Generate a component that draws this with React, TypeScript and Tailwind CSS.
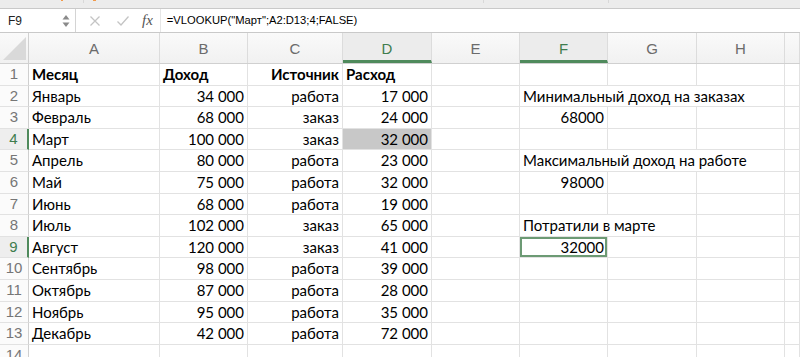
import React from "react";

const COLS = [
  { key: "A", w: 131 },
  { key: "B", w: 88 },
  { key: "C", w: 95 },
  { key: "D", w: 89 },
  { key: "E", w: 88 },
  { key: "F", w: 88 },
  { key: "G", w: 89 },
  { key: "H", w: 88 },
  { key: "I", w: 15 },
];

type Cell = { text?: string; align?: "left" | "right"; bold?: boolean; span?: number; gray?: boolean; active?: boolean };

const table: string[][] = [
  ["Месяц", "Доход", "Источник", "Расход"],
  ["Январь", "34 000", "работа", "17 000"],
  ["Февраль", "68 000", "заказ", "24 000"],
  ["Март", "100 000", "заказ", "32 000"],
  ["Апрель", "80 000", "работа", "23 000"],
  ["Май", "75 000", "работа", "32 000"],
  ["Июнь", "68 000", "работа", "19 000"],
  ["Июль", "102 000", "заказ", "65 000"],
  ["Август", "120 000", "заказ", "41 000"],
  ["Сентябрь", "98 000", "работа", "39 000"],
  ["Октябрь", "87 000", "работа", "28 000"],
  ["Ноябрь", "95 000", "работа", "35 000"],
  ["Декабрь", "42 000", "работа", "72 000"],
];

const extra: Record<number, Cell> = {
  2: { text: "Минимальный доход на заказах", span: 3 },
  3: { text: "68000", align: "right" },
  5: { text: "Максимальный доход на работе", span: 3 },
  6: { text: "98000", align: "right" },
  8: { text: "Потратили в марте", span: 2 },
  9: { text: "32000", align: "right", active: true },
};

function buildRow(r: number): Cell[] {
  const cells: Cell[] = [];
  const d = table[r - 1];
  if (d) {
    const bold = r === 1;
    cells.push({ text: d[0], bold, align: "left" });
    cells.push({ text: d[1], bold, align: bold ? "left" : "right" });
    cells.push({ text: d[2], bold, align: "right" });
    cells.push({ text: d[3], bold, align: bold ? "left" : "right", gray: r === 4 });
  } else {
    cells.push({}, {}, {}, {});
  }
  cells.push({});
  const ex = extra[r];
  if (ex) {
    cells.push(ex);
    const sp = ex.span || 1;
    for (let i = sp; i < 3; i++) cells.push({});
  } else {
    cells.push({}, {}, {});
  }
  cells.push({});
  return cells;
}

function RowView({ r }: { r: number }) {
  const cells = buildRow(r);
  const sel = r === 4 || r === 9;
  let ci = 0;
  return (
    <div className="flex h-[21.6px] shrink-0">
      <div
        className={`w-[29px] shrink-0 flex items-center justify-center border-b border-[#e2e2e2] text-[15px] ${
          sel ? "text-[#3f7d4e] border-r-2 border-r-[#4f8a5c] bg-[#eeeeee]" : "text-[#767676] border-r border-r-[#cfcfcf] bg-[#fbfbfb]"
        }`}
        style={{ fontFamily: "'Liberation Sans', Arial, sans-serif" }}
      >
        {r}
      </div>
      {cells.map((c, i) => {
        const span = c.span || 1;
        let w = 0;
        for (let k = 0; k < span; k++) w += COLS[ci + k].w;
        ci += span;
        return (
          <div
            key={i}
            style={{ width: w }}
            className={`shrink-0 relative flex items-center px-[3px] border-r border-b border-[#e2e2e2] text-[15px] text-black whitespace-nowrap overflow-visible ${
              c.align === "right" ? "justify-end" : "justify-start"
            } ${c.bold ? "font-bold" : ""} ${c.gray ? "bg-[#c8c8c8]" : ""}`}
          >
            {c.active && <div className="absolute inset-[0px] border-2 border-[#6c9a74] pointer-events-none" />}
            <span className="relative">{c.text}</span>
          </div>
        );
      })}
    </div>
  );
}

export default function App() {
  return (
    <div className="w-[800px] h-[357px] overflow-hidden bg-white flex flex-col" style={{ fontFamily: "Lato, 'Noto Sans', sans-serif" }}>
      {/* top toolbar remnant */}
      <div className="h-[8px] shrink-0 bg-[#ececec] relative flex">
        <div className="w-[61px]" />
        <div className="w-[2px] h-[1px] bg-[#f29a4a]" />
        <div className="w-[20px]" />
        <div className="w-[1px] h-[3px] bg-[#d8d8d8]" />
        <div className="w-[9px]" />
        <div className="w-[3px] h-[1px] bg-[#f29a4a]" />
        <div className="w-[387px]" />
        <div className="w-[1px] h-[3px] bg-[#d8d8d8]" />
        <div className="w-[124px]" />
        <div className="w-[1px] h-[3px] bg-[#d8d8d8]" />
      </div>
      {/* formula bar */}
      <div className="h-[25px] shrink-0 flex items-center border-t border-b border-[#c9c9c9] bg-white" style={{ fontFamily: "'Liberation Sans', Arial, sans-serif" }}>
        <div className="w-[76px] h-full flex items-center justify-between pl-[8px] pr-[5px] border-r border-[#d4d4d4]">
          <span className="text-[12px] text-[#222]">F9</span>
          <svg width="8" height="14" viewBox="0 0 8 14">
            <path d="M4 1 L7.5 5.5 L0.5 5.5 Z" fill="#8a8a8a" />
            <path d="M4 13 L7.5 8.5 L0.5 8.5 Z" fill="#8a8a8a" />
          </svg>
        </div>
        <div className="w-[12px]" />
        <svg width="12" height="12" viewBox="0 0 12 12" className="ml-[1px]">
          <path d="M1.5 1.5 L10.5 10.5 M10.5 1.5 L1.5 10.5" stroke="#c4c4c4" strokeWidth="1.3" />
        </svg>
        <div className="w-[15px]" />
        <svg width="14" height="12" viewBox="0 0 14 12">
          <path d="M1.5 6.5 L5 10 L12.5 1.5" stroke="#c4c4c4" strokeWidth="1.3" fill="none" />
        </svg>
        <div className="w-[12px]" />
        <span className="text-[15px] italic text-[#555]" style={{ fontFamily: "'Liberation Serif', serif" }}>
          fx
        </span>
        <div className="w-[8px] h-full border-r border-[#e6e6e6]" />
        <span className="ml-[6px] text-[11.2px] text-black">=VLOOKUP("Март";A2:D13;4;FALSE)</span>
      </div>
      {/* column headers */}
      <div className="h-[31px] shrink-0 flex bg-gradient-to-b from-[#fafafa] to-[#f1f1f1] border-b border-[#d0d0d0]" style={{ fontFamily: "'Liberation Sans', Arial, sans-serif" }}>
        <div className="w-[29px] shrink-0 border-r border-[#d0d0d0] relative">
          <svg width="29" height="31" viewBox="0 0 29 31" className="absolute inset-0">
            <path d="M3 27 L26 4 L26 27 Z" fill="#d9d9d9" />
          </svg>
        </div>
        {COLS.map((c) => {
          const sel = c.key === "D" || c.key === "F";
          return (
            <div
              key={c.key}
              style={{ width: c.w }}
              className={`shrink-0 flex items-center justify-center border-r border-[#dcdcdc] text-[15px] ${
                sel ? "text-[#3f7d4e] border-b-[3px] border-b-[#4f8a5c] pt-[5px] bg-[#ececec]" : "text-[#6b6b6b] pt-[3px]"
              }`}
            >
              {c.key !== "I" ? c.key : ""}
            </div>
          );
        })}
      </div>
      {Array.from({ length: 14 }, (_, i) => (
        <RowView key={i} r={i + 1} />
      ))}
    </div>
  );
}
